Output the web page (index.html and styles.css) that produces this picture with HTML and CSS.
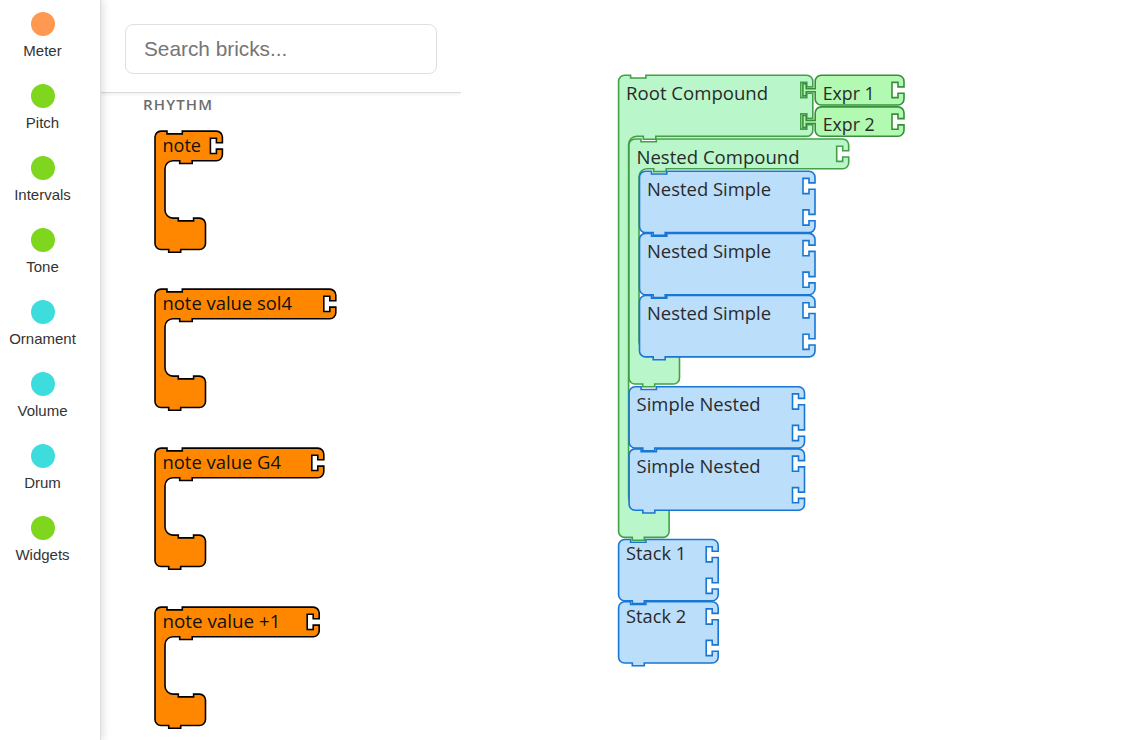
FILE: index.html
```html
<!DOCTYPE html>
<html lang="en">
<head>
<meta charset="utf-8">
<title>Bricks</title>
<link rel="stylesheet" href="styles.css">
</head>
<body>
<div class="app">
  <nav class="sidebar">
    <button class="category"><span class="dot orange"></span>Meter</button>
    <button class="category"><span class="dot green"></span>Pitch</button>
    <button class="category"><span class="dot green"></span>Intervals</button>
    <button class="category"><span class="dot green"></span>Tone</button>
    <button class="category"><span class="dot cyan"></span>Ornament</button>
    <button class="category"><span class="dot cyan"></span>Volume</button>
    <button class="category"><span class="dot cyan"></span>Drum</button>
    <button class="category"><span class="dot green"></span>Widgets</button>
  </nav>
  <section class="palette">
    <div class="search"><input class="search-input" type="text" placeholder="Search bricks..."></div>
    <h2 class="group-title">RHYTHM</h2>
    <div class="brick-list" id="palette"></div>
  </section>
  <main class="workspace"><svg class="canvas" id="canvas" width="660" height="740" viewBox="461 0 660 740"></svg></main>
</div>
<script src="bricks.js"></script>
</body>
</html>
```
FILE: styles.css
```css
* { box-sizing: border-box; }
body { margin: 0; background: #fff; font-family: "Liberation Sans", Arial, sans-serif; overflow: hidden; }
.app { display: flex; width: 1121px; height: 740px; overflow: hidden; }
.sidebar {
  position: relative; z-index: 1; flex: none; width: 101px; padding: 12px 15px 0 0;
  background: #fff; border-right: 1px solid #dedede; box-shadow: 2px 0 8px rgba(0, 0, 0, 0.13);
}
.category {
  display: flex; flex-direction: column; align-items: center; gap: 6px;
  width: 85px; height: 72px; padding: 0; border: 0; background: none;
  font: 15px/18px "Liberation Sans", Arial, sans-serif; color: #333;
}
.dot { width: 24px; height: 24px; border-radius: 50%; flex: none; }
.orange { background: #ff9850; }
.green { background: #7ed61f; }
.cyan { background: #3edddd; }
.palette { flex: none; width: 360px; height: 740px; overflow: hidden; }
.search { height: 93px; padding: 24px; border-bottom: 1px solid #dadada; box-shadow: 0 1px 4px rgba(0, 0, 0, 0.08); }
.search-input {
  display: block; width: 312px; height: 50px; padding: 0 18px; border: 1px solid #dcdfe4; border-radius: 8px;
  background: #fff; font: 20.8px "Liberation Sans", Arial, sans-serif; outline: none;
}
.search-input::placeholder { color: #757575; }
.group-title {
  margin: 0; padding: 1px 0 0 42px; height: 34.6px;
  font: 600 15px/20px "Open Sans", "Noto Sans", sans-serif; letter-spacing: 1.15px; color: #6c6c6c;
}
.brick-list { display: flex; flex-direction: column; padding-left: 51px; gap: 32.8px; }
.palette-brick { display: block; height: 126px; flex: none; }
.workspace { flex: none; width: 660px; }
.canvas { display: block; }
.brick { stroke-width: 1.6; }
.brick-rhythm { fill: #ff8700; stroke: #000; }
.brick-compound { fill: #b9f6ca; stroke: #43a047; }
.brick-simple { fill: #bbdefb; stroke: #1976d2; }
.brick-expr { fill: #b2f9b2; stroke: #388e3c; }
.label { font: 19px "Open Sans", "Noto Sans", sans-serif; fill: #2a2a2a; }
.label-rhythm { fill: #111; }
```
FILE: bricks.js
```js
const NS = "http://www.w3.org/2000/svg";

// Right edge with one or two sockets, starting and ending on the edge line.
function rightEdge(w, header, sockets) {
  let d = `H${w - 6}A6 6 0 0 1 ${w} 6`;
  for (let i = 0; i < sockets; i++) {
    const y = i * 31.5;
    d += `V${y + 11.7}H${w - 6}V${y + 7.2}H${w - 12}V${y + 22.4}H${w - 6}V${y + 18}H${w}`;
  }
  return d + `V${header - 6}A6 6 0 0 1 ${w - 6} ${header}`;
}

const topEdge = "M6 0H12V2.8H27.3V0";

// Bottom edge with its tab, then the left edge back to the start.
function closeEdge(h) {
  return `H25.7V${h + 2.8}H13.7V${h}H6A6 6 0 0 1 0 ${h - 6}V6A6 6 0 0 1 6 0Z`;
}

function simplePath(w, h, sockets) {
  return topEdge + rightEdge(w, h, sockets) + closeEdge(h);
}

function compoundPath(w, header, armTop, h, sockets) {
  return topEdge + rightEdge(w, header, sockets) +
    `H37.2V${header + 2.8}H24.7V${header}H18A8 8 0 0 0 10 ${header + 8}` +
    `V${armTop - 8}A8 8 0 0 0 18 ${armTop}H23.3V${armTop + 2.8}H38.6V${armTop}` +
    `H44.5A6 6 0 0 1 50.5 ${armTop + 6}V${h - 6}A6 6 0 0 1 44.5 ${h}` + closeEdge(h);
}

function exprPath(w, h) {
  return "M6 0" + rightEdge(w, h, 1) +
    `H6A6 6 0 0 1 0 ${h - 6}V16.6H-9V20.7H-12.3V8.6H-9V13.5H0V6A6 6 0 0 1 6 0Z`;
}

function draw(svg, x, y, d, kind, text, textWidth, tx = 7.5, ty = 21) {
  const path = document.createElementNS(NS, "path");
  path.setAttribute("d", d);
  path.setAttribute("transform", `translate(${x} ${y})`);
  path.setAttribute("class", `brick brick-${kind}`);
  const label = document.createElementNS(NS, "text");
  label.setAttribute("x", x + tx);
  label.setAttribute("y", y + ty);
  label.setAttribute("textLength", textWidth);
  label.setAttribute("lengthAdjust", "spacingAndGlyphs");
  label.setAttribute("class", `label label-${kind}`);
  label.textContent = text;
  svg.append(path, label);
}

const palette = document.getElementById("palette");
[["note", 67.4, 38.5], ["note value sol4", 180.8, 129.5], ["note value G4", 168.8, 118.5], ["note value +1", 164.2, 118]]
  .forEach(([text, w, textWidth]) => {
    const svg = document.createElementNS(NS, "svg");
    svg.setAttribute("class", "palette-brick");
    svg.setAttribute("width", w + 8);
    svg.setAttribute("height", 126);
    draw(svg, 3, 3.1, compoundPath(w, 29.6, 87, 118.4, 1), "rhythm", text, textWidth);
    palette.append(svg);
  });

const canvas = document.getElementById("canvas");
draw(canvas, 618.6, 75.2, compoundPath(194.2, 61.2, 430, 462.2, 2), "compound", "Root Compound", 142, 7.5, 24.5);
draw(canvas, 815.2, 75.2, exprPath(88.8, 29.8), "expr", "Expr 1", 52, 7.5, 24.5);
draw(canvas, 815.2, 106.9, exprPath(88.8, 29.3), "expr", "Expr 2", 52, 7.5, 24);
draw(canvas, 629, 139, compoundPath(219.7, 29.8, 211, 245, 1), "compound", "Nested Compound", 163, 7.5, 24.5);
[171.2, 233.4, 295.5].forEach(y =>
  draw(canvas, 639.5, y, simplePath(175.5, 61.4, 2), "simple", "Nested Simple", 124, 7.5, 24.5));
[386.7, 448.9].forEach(y =>
  draw(canvas, 629.1, y, simplePath(175.4, 61.3, 2), "simple", "Simple Nested", 124, 7.5, 24));
draw(canvas, 618.6, 539.5, simplePath(99.6, 61.3, 2), "simple", "Stack 1", 60, 7.5, 20.5);
draw(canvas, 618.6, 601.7, simplePath(99.6, 61.3, 2), "simple", "Stack 2", 60, 7.5, 21);
```
